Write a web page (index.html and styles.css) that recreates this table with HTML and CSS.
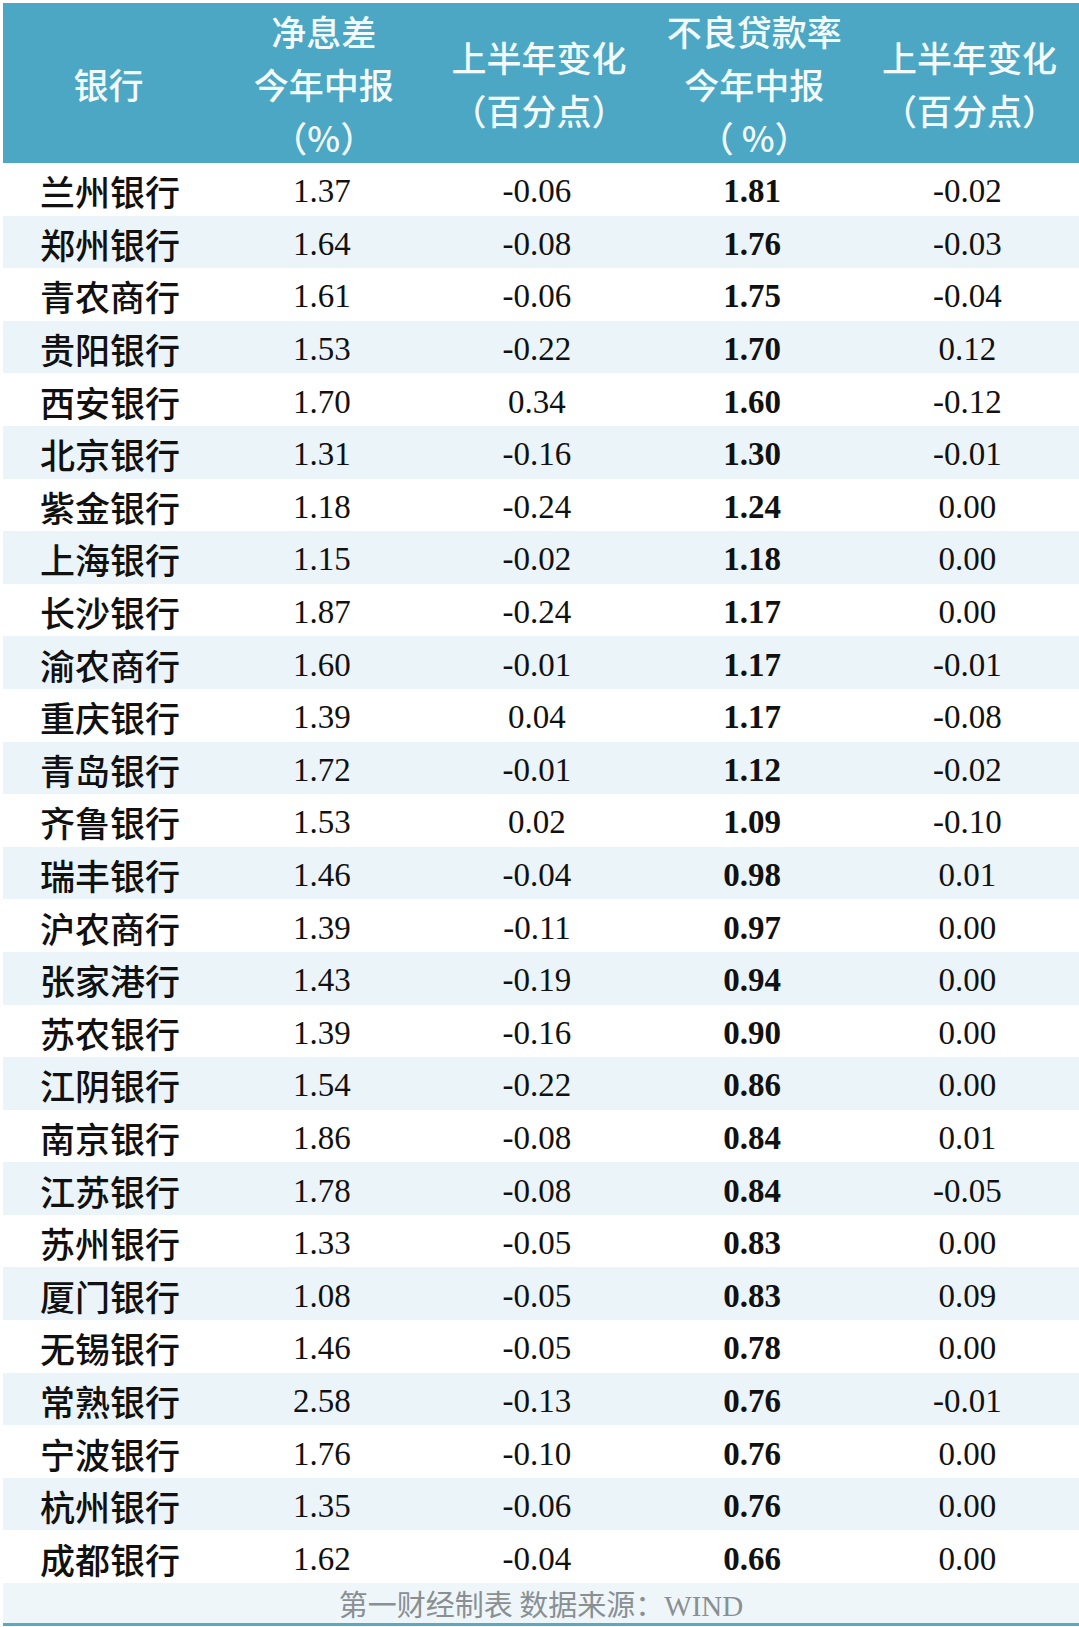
FILE: index.html
```html
<!DOCTYPE html>
<html lang="zh-CN">
<head>
<meta charset="utf-8">
<title>银行净息差与不良贷款率</title>
<link rel="stylesheet" href="styles.css">
</head>
<body>
<div class="table">
  <div class="head">
    <div class="hc"><span>银行</span></div>
    <div class="hc"><span>净息差</span><span>今年中报</span><span>（%）</span></div>
    <div class="hc"><span>上半年变化</span><span>（百分点）</span></div>
    <div class="hc"><span>不良贷款率</span><span>今年中报</span><span>（ %）</span></div>
    <div class="hc"><span>上半年变化</span><span>（百分点）</span></div>
  </div>
  <div class="row"><div class="name">兰州银行</div><div class="num">1.37</div><div class="num">-0.06</div><div class="num bold">1.81</div><div class="num">-0.02</div></div>
  <div class="row"><div class="name">郑州银行</div><div class="num">1.64</div><div class="num">-0.08</div><div class="num bold">1.76</div><div class="num">-0.03</div></div>
  <div class="row"><div class="name">青农商行</div><div class="num">1.61</div><div class="num">-0.06</div><div class="num bold">1.75</div><div class="num">-0.04</div></div>
  <div class="row"><div class="name">贵阳银行</div><div class="num">1.53</div><div class="num">-0.22</div><div class="num bold">1.70</div><div class="num">0.12</div></div>
  <div class="row"><div class="name">西安银行</div><div class="num">1.70</div><div class="num">0.34</div><div class="num bold">1.60</div><div class="num">-0.12</div></div>
  <div class="row"><div class="name">北京银行</div><div class="num">1.31</div><div class="num">-0.16</div><div class="num bold">1.30</div><div class="num">-0.01</div></div>
  <div class="row"><div class="name">紫金银行</div><div class="num">1.18</div><div class="num">-0.24</div><div class="num bold">1.24</div><div class="num">0.00</div></div>
  <div class="row"><div class="name">上海银行</div><div class="num">1.15</div><div class="num">-0.02</div><div class="num bold">1.18</div><div class="num">0.00</div></div>
  <div class="row"><div class="name">长沙银行</div><div class="num">1.87</div><div class="num">-0.24</div><div class="num bold">1.17</div><div class="num">0.00</div></div>
  <div class="row"><div class="name">渝农商行</div><div class="num">1.60</div><div class="num">-0.01</div><div class="num bold">1.17</div><div class="num">-0.01</div></div>
  <div class="row"><div class="name">重庆银行</div><div class="num">1.39</div><div class="num">0.04</div><div class="num bold">1.17</div><div class="num">-0.08</div></div>
  <div class="row"><div class="name">青岛银行</div><div class="num">1.72</div><div class="num">-0.01</div><div class="num bold">1.12</div><div class="num">-0.02</div></div>
  <div class="row"><div class="name">齐鲁银行</div><div class="num">1.53</div><div class="num">0.02</div><div class="num bold">1.09</div><div class="num">-0.10</div></div>
  <div class="row"><div class="name">瑞丰银行</div><div class="num">1.46</div><div class="num">-0.04</div><div class="num bold">0.98</div><div class="num">0.01</div></div>
  <div class="row"><div class="name">沪农商行</div><div class="num">1.39</div><div class="num">-0.11</div><div class="num bold">0.97</div><div class="num">0.00</div></div>
  <div class="row"><div class="name">张家港行</div><div class="num">1.43</div><div class="num">-0.19</div><div class="num bold">0.94</div><div class="num">0.00</div></div>
  <div class="row"><div class="name">苏农银行</div><div class="num">1.39</div><div class="num">-0.16</div><div class="num bold">0.90</div><div class="num">0.00</div></div>
  <div class="row"><div class="name">江阴银行</div><div class="num">1.54</div><div class="num">-0.22</div><div class="num bold">0.86</div><div class="num">0.00</div></div>
  <div class="row"><div class="name">南京银行</div><div class="num">1.86</div><div class="num">-0.08</div><div class="num bold">0.84</div><div class="num">0.01</div></div>
  <div class="row"><div class="name">江苏银行</div><div class="num">1.78</div><div class="num">-0.08</div><div class="num bold">0.84</div><div class="num">-0.05</div></div>
  <div class="row"><div class="name">苏州银行</div><div class="num">1.33</div><div class="num">-0.05</div><div class="num bold">0.83</div><div class="num">0.00</div></div>
  <div class="row"><div class="name">厦门银行</div><div class="num">1.08</div><div class="num">-0.05</div><div class="num bold">0.83</div><div class="num">0.09</div></div>
  <div class="row"><div class="name">无锡银行</div><div class="num">1.46</div><div class="num">-0.05</div><div class="num bold">0.78</div><div class="num">0.00</div></div>
  <div class="row"><div class="name">常熟银行</div><div class="num">2.58</div><div class="num">-0.13</div><div class="num bold">0.76</div><div class="num">-0.01</div></div>
  <div class="row"><div class="name">宁波银行</div><div class="num">1.76</div><div class="num">-0.10</div><div class="num bold">0.76</div><div class="num">0.00</div></div>
  <div class="row"><div class="name">杭州银行</div><div class="num">1.35</div><div class="num">-0.06</div><div class="num bold">0.76</div><div class="num">0.00</div></div>
  <div class="row"><div class="name">成都银行</div><div class="num">1.62</div><div class="num">-0.04</div><div class="num bold">0.66</div><div class="num">0.00</div></div>
  <div class="foot">第一财经制表 数据来源：<span class="latin">WIND</span></div>
</div>
</body>
</html>
```

FILE: styles.css
```css
html, body {
  margin: 0;
  padding: 0;
  background: #ffffff;
}

.table {
  margin: 3px 0 0 3px;
  width: 1076px;
}

.head {
  display: grid;
  grid-template-columns: repeat(5, 1fr);
  height: 160px;
  background: #4ba7c3;
}

.hc {
  display: flex;
  flex-direction: column;
  align-items: center;
  justify-content: center;
  color: #f3fafc;
  font-family: "Noto Sans CJK SC", "Liberation Serif", serif;
  font-size: 35px;
  font-weight: 500;
  line-height: 53px;
  white-space: pre;
  padding-right: 4px;
}

.row {
  display: grid;
  grid-template-columns: repeat(5, 1fr);
  height: 52.6px;
  align-items: center;
  color: #111111;
}

.row:nth-of-type(odd) {
  background: #ebf4f9;
}

.name {
  padding: 4px 0 0 37px;
  font-family: "Noto Sans CJK SC", sans-serif;
  font-size: 35px;
  font-weight: 500;
  line-height: 40px;
}

.num {
  padding: 4px 8px 0 0;
  text-align: center;
  font-family: "Liberation Serif", serif;
  font-size: 33px;
  line-height: 40px;
}

.bold {
  font-weight: bold;
}

.foot {
  height: 40px;
  background: #eef6f9;
  border-bottom: 3px solid #5aa9bf;
  text-align: center;
  color: #8a8f92;
  font-family: "Noto Sans CJK SC", sans-serif;
  font-size: 29px;
  line-height: 40px;
  overflow: hidden;
}

.latin {
  font-family: "Liberation Serif", serif;
}
```
